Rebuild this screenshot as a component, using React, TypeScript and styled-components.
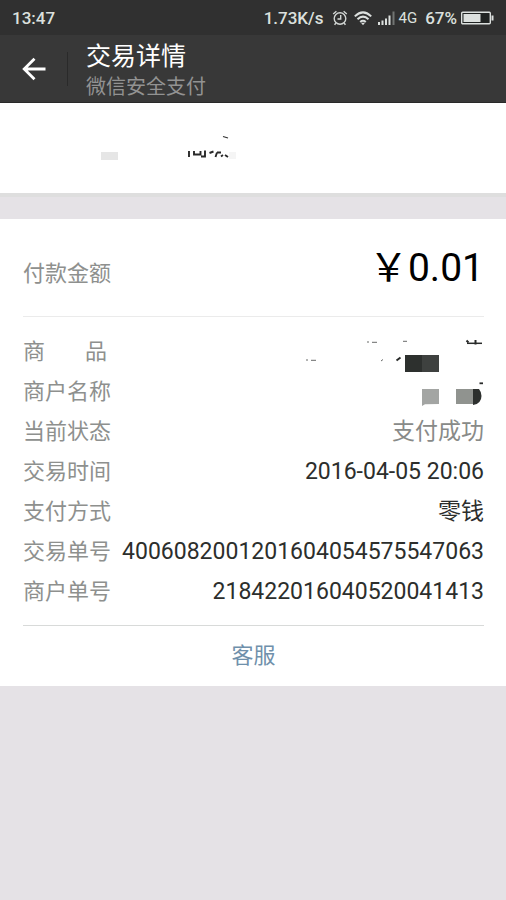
import React from 'react';
import styled, { createGlobalStyle } from 'styled-components';

const GlobalStyle = createGlobalStyle`
  *, *::before, *::after { box-sizing: border-box; }
  body {
    margin: 0;
    background: #e5e2e6;
    font-family: Roboto, "Noto Sans CJK SC", sans-serif;
  }
`;

const Page = styled.div`
  min-height: 100vh;
  background: #e5e2e6;
`;

const StatusBar = styled.div`
  display: flex;
  align-items: center;
  justify-content: space-between;
  height: 35px;
  padding: 0 12px;
  background: #303030;
  color: #dce0de;
  font-size: 17px;
  font-weight: 500;
  line-height: 20px;
`;

const StatusGroup = styled.div<{ $gap: number }>`
  display: flex;
  align-items: center;
  gap: ${({ $gap }) => $gap}px;
`;

const Network = styled.span`
  font-size: 15px;
  font-weight: 400;
`;

const Icon = styled.svg`
  display: block;
  flex: none;
`;

const Header = styled.header`
  display: flex;
  align-items: center;
  height: 68px;
  background: #383838;
  border-bottom: 1px solid #292929;
`;

const BackButton = styled.button`
  display: flex;
  align-items: center;
  justify-content: center;
  width: 68px;
  height: 34px;
  padding: 0;
  border: 0;
  border-right: 1px solid #2a2a2a;
  background: none;
  color: #fff;
`;

const Titles = styled.div`
  padding-left: 18px;
`;

const Title = styled.h1`
  margin: 0;
  color: #fff;
  font-size: 25px;
  font-weight: 400;
  line-height: 36px;
`;

const Subtitle = styled.p`
  margin: 0;
  color: #929292;
  font-size: 20px;
  line-height: 24px;
`;

const Merchant = styled.section`
  padding: 32px 0 30px 100px;
  background: #fff;
  border-bottom: 4px solid #dedede;
`;

const Details = styled.main`
  margin-top: 22px;
  padding: 0 22px 0 23px;
  background: #fff;
`;

const AmountRow = styled.div`
  display: flex;
  align-items: center;
  justify-content: space-between;
  height: 98px;
  border-bottom: 1px solid #ebebeb;
`;

const AmountLabel = styled.span`
  padding-top: 12px;
  color: #8e908e;
  font-size: 22px;
  line-height: 32px;
`;

const Amount = styled.strong`
  color: #000;
  font-size: 39px;
  font-weight: 400;
  line-height: 48px;
`;

const Facts = styled.dl`
  margin: 0;
  padding: 15px 0 13px;
  border-bottom: 1px solid #d8dad9;
`;

const Fact = styled.div`
  display: flex;
  align-items: center;
  justify-content: space-between;
  height: 40px;
`;

const FactName = styled.dt`
  display: flex;
  gap: 40px;
  color: #8e908e;
  font-size: 22px;
  line-height: 32px;
  white-space: nowrap;
`;

const FactValue = styled.dd<{ $muted?: boolean }>`
  margin: 0;
  color: ${({ $muted }) => ($muted ? '#888a88' : '#2c2e2c')};
  font-size: 23px;
  line-height: 32px;
  white-space: nowrap;
`;

const Support = styled.a`
  display: block;
  color: #6f90ab;
  font-size: 22px;
  line-height: 60px;
  text-align: center;
  text-decoration: none;
`;

const AlarmIcon = () => (
  <Icon width="16" height="18" viewBox="0 0 16 18" fill="none" stroke="#d3d7d5" strokeWidth="1.4" aria-hidden="true">
    <circle cx="8" cy="9.5" r="5.8" />
    <path d="M1.2 5 4.4 2.2M14.8 5l-3.2-2.8M3.8 14 2.6 15.8M12.2 14l1.2 1.8M8.7 6v4H5.5" />
  </Icon>
);

const WifiIcon = () => (
  <Icon width="18" height="16" viewBox="0 0 18 16" fill="none" stroke="#dce0de" strokeWidth="2" aria-hidden="true">
    <path d="M.8 6.4Q9-1.6 17.2 6.4M3.5 9.2Q9 4 14.5 9.2M6.2 11.9Q9 9.5 11.8 11.9" />
    <path d="M7 12.7h4l-2 2.6z" fill="#dce0de" stroke="none" />
  </Icon>
);

const SignalIcon = () => (
  <Icon width="17" height="16" viewBox="0 0 17 16" fill="#dce0de" aria-hidden="true">
    <path d="M0 12h2v3H0zM3.5 10.5h2V15h-2zM7 8.5h2V15H7zM10.5 5.5h2V15h-2z" />
    <path d="M14.5 1.5h2V15h-2z" fill="#727573" />
  </Icon>
);

const BatteryIcon = () => (
  <Icon width="33" height="14" viewBox="0 0 33 14" aria-hidden="true">
    <rect x=".7" y="1.2" width="28.6" height="11.6" rx="1" fill="#202322" stroke="#dce0de" strokeWidth="1.4" />
    <path d="M2.5 3h17v8h-17z" fill="#dce0de" />
    <path d="M30.5 4.5h2v5h-2z" fill="#dce0de" />
  </Icon>
);

const BackIcon = () => (
  <Icon width="24" height="24" viewBox="0 0 24 24" fill="none" stroke="currentColor" strokeWidth="2.8" aria-hidden="true">
    <path d="M23.5 12H2.5M12.5 1.7 2.2 12l10.3 10.3" />
  </Icon>
);

const MaskedMerchant = () => (
  <Icon width="140" height="28" viewBox="0 0 140 28" role="img" aria-label="Hidden merchant">
    <path d="M1 17h17v8H1z" fill="#e6e6e6" />
    <path d="M129 17h7v7h-7z" fill="#f5f5f5" />
    <path
      d="M89 16v6M94 16v3.5h6.5V16M105 15.5v6h-4M109.5 18l4-1.5M117 17.5l-1.5 4.5M117 17.500h4M121 21.5l2-1.5M125 20l3 2"
      fill="none"
      stroke="#292929"
      strokeWidth="1.9"
    />
    <path d="m123 1.5 5 1.5" stroke="#333" strokeWidth="1.3" />
  </Icon>
);

const MaskedProduct = () => (
  <Icon width="180" height="40" viewBox="0 0 180 40" role="img" aria-label="Hidden product">
    <path d="M101 23h17v17h-17z" fill="#2d302e" />
    <path d="M118 23h17v17h-17z" fill="#3e413f" />
    <path d="M163 11.3h15" stroke="#292b2a" strokeWidth="1.5" />
    <path d="m162.500 8.5 2 2M171.5 8v4.5M92.5 28.5l4-3" fill="none" stroke="#292b2a" strokeWidth="2" />
    <path d="M63 10h2M68 10.3h5M99 9.3h4M2 28h2M7 28.3h5M77 29l2-1.5" stroke="#686a69" strokeWidth="1" />
  </Icon>
);

const MaskedName = () => (
  <Icon width="64" height="40" viewBox="0 0 64 40" role="img" aria-label="Hidden merchant name">
    <path d="M2 17h17v15L5 32.3 2 34z" fill="#a3a5a3" />
    <path d="M36 17h17v15H36z" fill="#90938f" />
    <path d="M53 17h6q2.5 3 2.5 7 0 7.5-8.5 9z" fill="#2d302e" />
    <path d="M59.5 11.3h3.5" stroke="#292b2a" strokeWidth="1.8" />
  </Icon>
);

type FactItem = {
  name: string[];
  value: React.ReactNode;
  muted?: boolean;
};

const facts: FactItem[] = [
  { name: ['商', '品'], value: <MaskedProduct /> },
  { name: ['商户名称'], value: <MaskedName /> },
  { name: ['当前状态'], value: '支付成功', muted: true },
  { name: ['交易时间'], value: '2016-04-05 20:06' },
  { name: ['支付方式'], value: '零钱' },
  { name: ['交易单号'], value: '4006082001201604054575547063' },
  { name: ['商户单号'], value: '218422016040520041413' },
];

export default function App() {
  return (
    <Page>
      <GlobalStyle />
      <StatusBar>
        <span>13:47</span>
        <StatusGroup $gap={8}>
          <span>1.73K/s</span>
          <StatusGroup $gap={6}>
            <AlarmIcon />
            <WifiIcon />
            <StatusGroup $gap={4}>
              <SignalIcon />
              <Network>4G</Network>
            </StatusGroup>
          </StatusGroup>
          <StatusGroup $gap={4}>
            <span>67%</span>
            <BatteryIcon />
          </StatusGroup>
        </StatusGroup>
      </StatusBar>
      <Header>
        <BackButton type="button" aria-label="返回">
          <BackIcon />
        </BackButton>
        <Titles>
          <Title>交易详情</Title>
          <Subtitle>微信安全支付</Subtitle>
        </Titles>
      </Header>
      <Merchant>
        <MaskedMerchant />
      </Merchant>
      <Details>
        <AmountRow>
          <AmountLabel>付款金额</AmountLabel>
          <Amount>￥0.01</Amount>
        </AmountRow>
        <Facts>
          {facts.map(({ name, value, muted }) => (
            <Fact key={name.join('')}>
              <FactName>
                {name.map((part) => (
                  <span key={part}>{part}</span>
                ))}
              </FactName>
              <FactValue $muted={muted}>{value}</FactValue>
            </Fact>
          ))}
        </Facts>
        <Support href="#support">客服</Support>
      </Details>
    </Page>
  );
}
